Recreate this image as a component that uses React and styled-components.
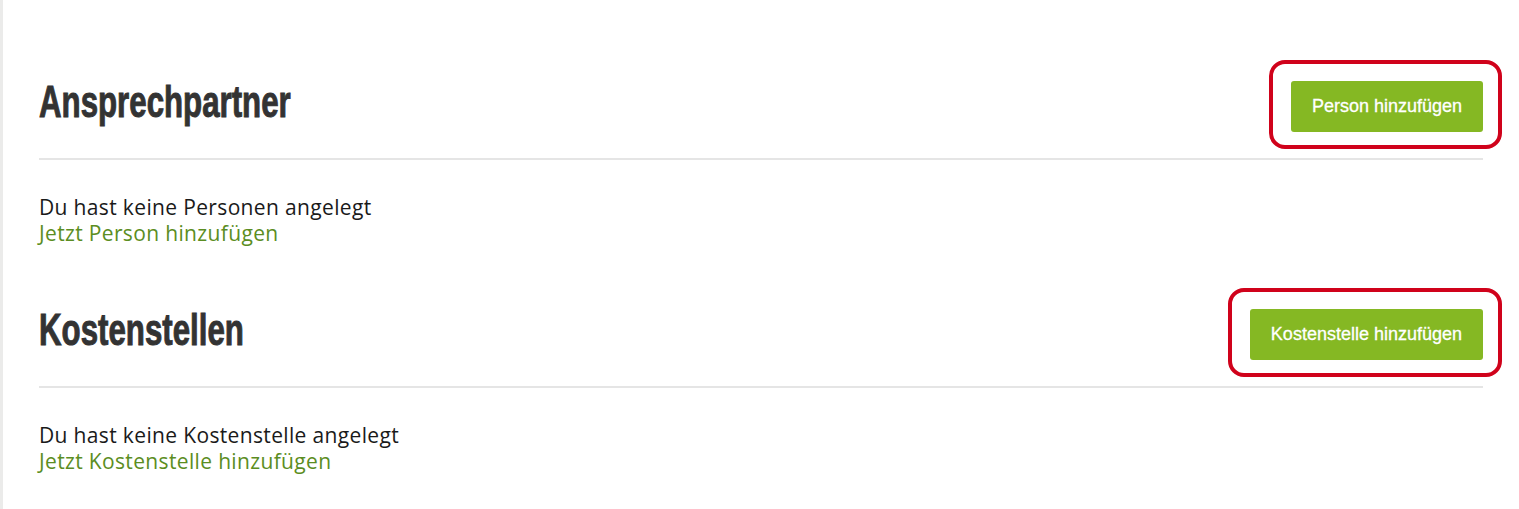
import styled, { createGlobalStyle } from "styled-components";

const GlobalStyle = createGlobalStyle`
	html, body {
		margin: 0;
		padding: 0;
		background: #fff;
	}
`;

const Page = styled.div`
	min-height: 509px;
	box-sizing: border-box;
	border-left: 3px solid #ebebea;
	padding: 80px 36px 0 36px;
`;

const Section = styled.section`
	margin-bottom: 62px;
`;

const Header = styled.div`
	display: flex;
	justify-content: space-between;
	align-items: flex-start;
	padding-bottom: 26px;
	border-bottom: 2px solid #e5e5e5;
`;

const Title = styled.h2`
	margin: 0;
	font-family: "Liberation Sans", Arial, sans-serif;
	font-weight: 700;
	font-size: 44px;
	line-height: 44px;
	color: #333;
	-webkit-text-stroke: 1px #333;
	transform: scaleX(0.71);
	transform-origin: left center;
	white-space: nowrap;
`;

const Marked = styled.div`
	position: relative;
	margin-top: 1px;
	&::after {
		content: "";
		position: absolute;
		inset: -21px -19px -17px -22px;
		border: 4px solid #d0021b;
		border-radius: 16px;
		pointer-events: none;
	}
`;

const Button = styled.button`
	display: block;
	height: 51px;
	padding: 0 21px;
	border: none;
	border-radius: 3px;
	background: #85b823;
	color: #fff;
	font-family: "Liberation Sans", Arial, sans-serif;
	font-size: 18px;
	-webkit-text-stroke: 0.3px #fff;
	cursor: pointer;
`;

const Empty = styled.div`
	padding-top: 34px;
	font-family: "Open Sans", sans-serif;
	font-size: 21px;
	letter-spacing: 0.35px;
	line-height: 26px;
	color: #1a1a1a;
`;

const Link = styled.a`
	display: block;
	color: #5b8d22;
	text-decoration: none;
	cursor: pointer;
`;

const sections = [
	{
		title: "Ansprechpartner",
		button: "Person hinzufügen",
		empty: "Du hast keine Personen angelegt",
		link: "Jetzt Person hinzufügen",
	},
	{
		title: "Kostenstellen",
		button: "Kostenstelle hinzufügen",
		empty: "Du hast keine Kostenstelle angelegt",
		link: "Jetzt Kostenstelle hinzufügen",
	},
];

const App = () => {
	return (
		<>
			<GlobalStyle />
			<Page>
				{sections.map((s) => (
					<Section key={s.title}>
						<Header>
							<Title>{s.title}</Title>
							<Marked>
								<Button>{s.button}</Button>
							</Marked>
						</Header>
						<Empty>
							<div>{s.empty}</div>
							<Link>{s.link}</Link>
						</Empty>
					</Section>
				))}
			</Page>
		</>
	);
};
export default App;
